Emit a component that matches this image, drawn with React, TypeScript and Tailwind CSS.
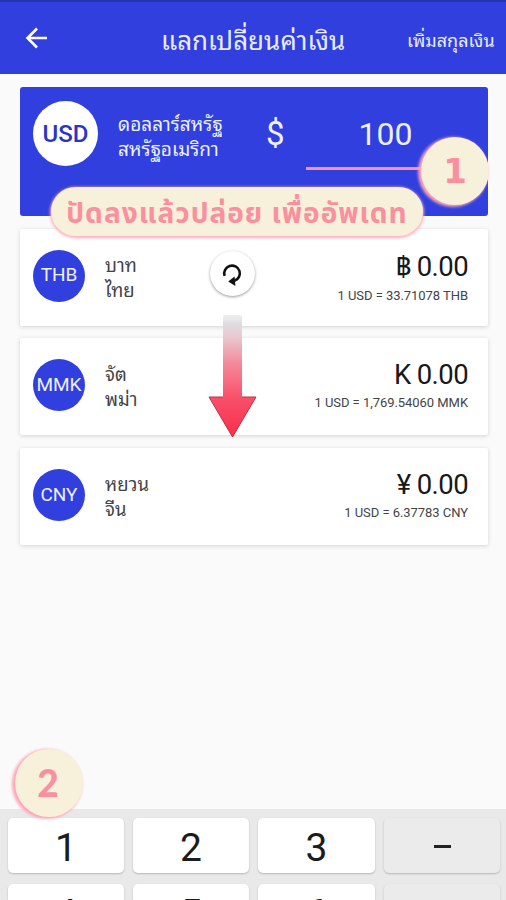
import React from "react";

type Rate = {
  code: string;
  name: string;
  country: string;
  symbol: string;
  rate: string;
};

const rates: Rate[] = [
  { code: "THB", name: "บาท", country: "ไทย", symbol: "฿", rate: "33.71078" },
  { code: "MMK", name: "จัต", country: "พม่า", symbol: "K", rate: "1,769.54060" },
  { code: "CNY", name: "หยวน", country: "จีน", symbol: "¥", rate: "6.37783" },
];

const keys = ["1", "2", "3", "−", "4", "5", "6", ""];

function Header() {
  return (
    <header className="flex h-[74px] shrink-0 items-center border-t-2 border-[#2434b0] bg-[#303fde] pt-1 text-[#e9ecff]">
      <svg className="-mt-1 ml-[25px] h-6 w-6" viewBox="0 0 24 24" fill="none" stroke="white" strokeWidth="2.6">
        <path d="M22 12H3M12 2.5L2.5 12L12 21.5" />
      </svg>
      <h1 className="ml-[112px] w-[186px] pt-[2px] text-[26px] leading-10 whitespace-nowrap">แลกเปลี่ยนค่าเงิน</h1>
      <span className="ml-[60px] pt-[2px] text-[18px] leading-8 whitespace-nowrap">เพิ่มสกุลเงิน</span>
    </header>
  );
}

function BaseCard() {
  return (
    <section className="relative h-[129px] shrink-0 rounded-[3px] bg-[#303fde] text-[#eef0ff]">
      <div className="flex items-start pl-[13px]">
        <div className="mt-[14px] flex h-[65px] w-[65px] items-center justify-center rounded-full bg-white text-[24px] font-medium text-[#2a35c8]">
          USD
        </div>
        <div className="mt-[25px] ml-5 w-[130px] text-[19px] leading-[25px] whitespace-nowrap">
          <p>ดอลลาร์สหรัฐ</p>
          <p>สหรัฐอเมริกา</p>
        </div>
        <div className="mt-[27px] ml-[18px] text-[33px] leading-10">$</div>
        <div className="mt-[27px] ml-[21px] h-[56px] w-[160px] border-b-[3px] border-[#fb91b1] text-center text-[32px] leading-10">
          100
        </div>
      </div>
      <div className="absolute top-[100px] left-[31px] flex h-[49px] w-[372px] items-center justify-center rounded-full bg-[#f7f0da] pt-[6px] font-['Noto_Sans_Thai','Noto_Sans',sans-serif] text-[28px] font-bold tracking-[1px] whitespace-nowrap text-[#fb8f9e] shadow-[0_1px_3px_1px_#ffadba]">
        ปัดลงแล้วปล่อย เพื่ออัพเดท
      </div>
      <div className="absolute top-[50px] left-[401px] flex h-[68px] w-[68px] items-center justify-center rounded-full bg-[#f7f0da] font-['DejaVu_Sans',sans-serif] text-[34px] font-bold text-[#fb8fa0] shadow-[-2px_1px_3px_1px_#ffa3b5]">
        1
      </div>
    </section>
  );
}

function RateCard({ item }: { item: Rate }) {
  return (
    <section className="flex h-[97px] shrink-0 items-start rounded-[2px] bg-white pr-5 pl-[13px] shadow-[0_1px_4px_rgba(0,0,0,0.16)]">
      <div className="mt-[21px] flex h-[52px] w-[52px] items-center justify-center rounded-full bg-[#303fde] text-[19px] text-[#eef0ff]">
        {item.code}
      </div>
      <div className="mt-[25px] ml-5 text-[18.5px] leading-[25px] text-[#444]">
        <p>{item.name}</p>
        <p>{item.country}</p>
      </div>
      <div className="mt-[18px] ml-auto text-right text-[#181818]">
        <p className={`text-[27.5px] tracking-[-0.6px] ${item.code === "THB" ? "leading-[40px]" : "leading-[38px]"}`}>
          {item.symbol} 0.00
        </p>
        <p className="text-[13px] leading-[18px] tracking-[-0.05px] text-[#444]">
          1 USD = {item.rate} {item.code}
        </p>
      </div>
    </section>
  );
}

function PullHint() {
  return (
    <div className="absolute top-[251px] left-[207px] w-[50px]">
      <div className="mx-auto flex h-[45px] w-[45px] items-center justify-center rounded-full bg-white shadow-[0_1px_3px_rgba(0,0,0,0.4)]">
        <svg className="h-6 w-6" viewBox="0 0 24 24" fill="none">
          <path d="M4.6 13.8A7.8 7.8 0 1 1 14.5 18.8" stroke="#111" strokeWidth="2.6" />
          <path d="M14.6 14.6L8.2 19.4L15.4 24Z" fill="#111" />
        </svg>
      </div>
      <svg className="mt-[17px] h-[126px] w-[50px]" viewBox="0 0 50 126">
        <defs>
          <linearGradient id="pull" x1="0" y1="0" x2="0" y2="1">
            <stop offset="0" stopColor="#dedee1" stopOpacity="0.5" />
            <stop offset="0.08" stopColor="#dedbe0" />
            <stop offset="0.18" stopColor="#e8c9cf" />
            <stop offset="0.4" stopColor="#f4889a" />
            <stop offset="0.68" stopColor="#f9506a" />
            <stop offset="1" stopColor="#fa2d49" />
          </linearGradient>
        </defs>
        <path d="M16 4Q16 2 18 2H33Q35 2 35 4V84H49L25.5 124L2 84H16Z" fill="url(#pull)" />
        <path d="M16 84H2L25.5 124L49 84H35" fill="none" stroke="#bd3044" strokeWidth="1" />
      </svg>
    </div>
  );
}

function Keypad() {
  return (
    <div className="relative grid h-[91px] shrink-0 grid-cols-[116px_116px_117px_116px] content-start gap-x-[9px] gap-y-[11px] overflow-hidden bg-[#e9e9e9] pt-[9px] pl-2">
      {keys.map((key, i) => (
        <div
          key={i}
          className={`flex h-[55px] items-center justify-center rounded-[5px] pt-[5px] text-[39px] text-[#1c1c1c] shadow-[0_1px_2px_rgba(0,0,0,0.22)] ${
            i % 4 === 3 ? "bg-[#ebebeb]" : "bg-white"
          }`}
        >
          {key === "−" ? <span className="-mt-[3px] h-[3px] w-[17px] bg-[#222]" /> : key}
        </div>
      ))}
    </div>
  );
}

export default function App() {
  return (
    <div className="relative flex h-[900px] w-[506px] flex-col overflow-hidden bg-[#fafafa] font-[Roboto,'Noto_Sans_Thai_Looped','Noto_Looped_Thai','Droid_Sans_Thai',Loma,Garuda,Waree,'Noto_Sans',sans-serif]">
      <Header />
      <main className="flex flex-1 flex-col gap-[12.6px] pt-[13px] pr-[18px] pl-5">
        <BaseCard />
        {rates.map((item) => (
          <RateCard key={item.code} item={item} />
        ))}
      </main>
      <PullHint />
      <Keypad />
      <div className="absolute top-[749px] left-[15px] flex h-[68px] w-[68px] items-center justify-center rounded-full bg-[#f7f0da] pr-[2px] font-[Lato,sans-serif] text-[37px] font-black text-[#fb8fa0] shadow-[-2px_1px_3px_1px_#ffa3b5]">
        2
      </div>
    </div>
  );
}
